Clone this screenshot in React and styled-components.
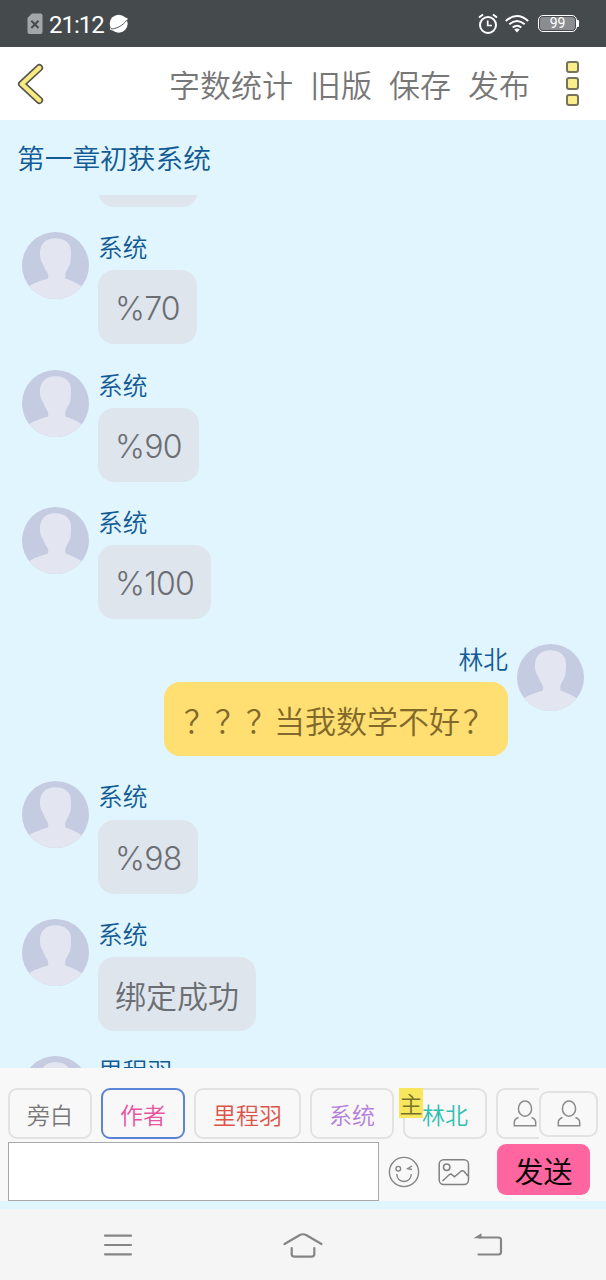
import React , {useState} from 'react';
import styled, {createGlobalStyle} from 'styled-components';

const messages = [
    {name : "系统", text : "%50", latin : true},
    {name : "系统", text : "%70", latin : true},
    {name : "系统", text : "%90", latin : true},
    {name : "系统", text : "%100", latin : true},
    {name : "林北", marks : "？？？", text : "当我数学不好", end : "？", mine : true},
    {name : "系统", text : "%98", latin : true},
    {name : "系统", text : "绑定成功"},
    {name : "里程羽", text : "你是谁"},
];

const roles = [
    {name : "旁白", color : "#777777"},
    {name : "作者", color : "#e8559f"},
    {name : "里程羽", color : "#dc5448"},
    {name : "系统", color : "#b57fdc"},
    {name : "林北", color : "#2fbfb0", main : true},
];


const Avatar = () => (
    <AvatarSvg viewBox="0 0 67 67">
        <clipPath id="round"><circle cx="33.5" cy="33.5" r="33.5" /></clipPath>
        <g clipPath="url(#round)">
            <rect width="67" height="67" fill="#c5cbe1" />
            <path fill="#e3e6f1" d="M33.5 6.300C43 6.300 49.300 11.500 49 20C49 23 49 28 48 32C47 35.500 44 38.500 43.300 42V46.500C50 49 56 51 60 54.500V67H7V54.500C11 51 18 49 26 46.500C26.500 45 26.500 43 25.500 41C24 38.500 22 36 21 32C18.500 29 17.700 24 18 20C18.500 11.500 24 6.300 33.500 6.300Z" />
        </g>
    </AvatarSvg>
);

const Person = () => (
    <svg width="24" height="28" viewBox="0 0 24 28" fill="none" stroke="#8a8a8a" strokeWidth="1.5">
        <ellipse cx="12" cy="8.700" rx="6.600" ry="7.600" />
        <path d="M5.500 17.500C2.500 18.500 1.300 20 1.300 22.500V25.700H22.700V22.500C22.700 20 21.500 18.500 18.500 17.500" />
    </svg>
);


function App() {
    const [selected , setSelected] = useState("作者");
    const [draft , setDraft] = useState("");

    return (
        <Page>
            <Global />

            <StatusBar>
                <svg width="16" height="22" viewBox="0 0 16 22">
                    <path d="M5 0.500H13.500Q15.500 0.500 15.500 2.500V19Q15.500 21 13.500 21H2.500Q0.500 21 0.500 19V5Z" fill="#a3a7a9" />
                    <path d="M4.300 7.800L11.500 15M11.500 7.800L4.300 15" stroke="#454a4d" strokeWidth="2" />
                </svg>
                <Time>21:12</Time>
                <svg width="20" height="20" viewBox="0 0 20 20">
                    <circle cx="9.700" cy="9.700" r="9" fill="#fff" />
                    <path d="M16 4Q19 2.800 18.500 5.500Q17 10 11 14Q5 17.500 1.500 16Q0.300 15 2 13Z" fill="#fff" />
                    <path d="M2 14.800C6 15.500 14.500 11.500 17.800 6" fill="none" stroke="#454a4d" strokeWidth="0.900" />
                </svg>
                <Spacer />
                <svg width="20" height="22" viewBox="0 0 20 22" fill="none" stroke="#fff">
                    <circle cx="10" cy="12" r="8" strokeWidth="2" />
                    <path d="M9.700 7.500V12.500H14" strokeWidth="1.700" />
                    <path d="M1 4.500L5 1.500M15 1.500L19 4.500" strokeWidth="2" />
                </svg>
                <Wifi width="24" height="18" viewBox="0 0 24 18" fill="none" stroke="#fff" strokeWidth="1.900">
                    <path d="M0.800 6Q12 -4 23.200 6M4.300 9.300Q12 2.500 19.700 9.300M7.700 12.500Q12 8.800 16.300 12.500" />
                    <path d="M9.300 14.500Q12 12.700 14.700 14.500L12 17.500Z" fill="#fff" stroke="none" />
                </Wifi>
                <Battery><Charge>99</Charge></Battery>
                <BatteryTip />
            </StatusBar>

            <Header>
                <Back aria-label="back">
                    <svg width="28" height="42" viewBox="0 0 28 42" fill="none" strokeLinecap="round" strokeLinejoin="round">
                        <path d="M22.300 4.800L4.800 21L22.300 37.200" stroke="#55554d" strokeWidth="7.600" />
                        <path d="M22.300 4.800L4.800 21L22.300 37.200" stroke="#f8ec80" strokeWidth="4.400" />
                    </svg>
                </Back>
                <Menu>
                    <MenuItem>字数统计</MenuItem>
                    <MenuItem>旧版</MenuItem>
                    <MenuItem>保存</MenuItem>
                    <MenuItem>发布</MenuItem>
                </Menu>
                <More><Dot /><Dot /><Dot /></More>
            </Header>

            <Chapter>第一章初获系统</Chapter>

            <ChatList>
                {messages.map((m , i) => (
                    <Message key={i} $mine={m.mine}>
                        <Avatar />
                        <Content $mine={m.mine}>
                            <Name>{m.name}</Name>
                            <Bubble $mine={m.mine} $latin={m.latin}>
                                {m.marks && <Marks>{m.marks}</Marks>}
                                {m.text}
                                {m.end && <Marks>{m.end}</Marks>}
                            </Bubble>
                        </Content>
                    </Message>
                ))}
            </ChatList>

            <Composer>
                <RoleBar>
                    <RoleList>
                        {roles.map(r => (
                            <Role key={r.name} $color={r.color} $active={r.name === selected} onClick={() => setSelected(r.name)}>
                                {r.main && <MainBadge>主</MainBadge>}
                                {r.name}
                            </Role>
                        ))}
                        <Role $icon><Person /></Role>
                    </RoleList>
                    <AddRole><Person /></AddRole>
                </RoleBar>

                <InputRow>
                    <Input value={draft} onChange={e => setDraft(e.target.value)} />
                    <Tools>
                        <svg width="32" height="32" viewBox="0 0 32 32" fill="none" stroke="#858585" strokeWidth="1.400">
                            <circle cx="16" cy="16" r="14.600" />
                            <circle cx="10.300" cy="12.700" r="2.300" />
                            <path d="M24 10L19.700 12.700L24 13.500M8.700 18Q9.300 25.300 16 25.500Q22.700 25.300 23.300 18" />
                        </svg>
                        <svg width="32" height="28" viewBox="0 0 32 28" fill="none" stroke="#808080" strokeWidth="1.500">
                            <rect x="1.200" y="1.700" width="29.300" height="24.800" rx="4.500" />
                            <circle cx="8.700" cy="9.300" r="3.200" />
                            <path d="M4.500 23L11.500 16.500Q13 15.500 14.300 17L16.500 18.700L23.300 13Q24.600 12.200 26 13.300L30 18" />
                        </svg>
                    </Tools>
                    <Send>发送</Send>
                </InputRow>
            </Composer>

            <NavBar>
                <svg width="30" height="24" viewBox="0 0 30 24" stroke="#858585" strokeWidth="2.200" strokeLinecap="round">
                    <path d="M2 2.700H28M2 12H28M2 21.300H28" />
                </svg>
                <svg width="42" height="28" viewBox="0 0 42 28" fill="none" stroke="#858585" strokeWidth="2.200" strokeLinecap="round" strokeLinejoin="round">
                    <path d="M2.500 13L17.500 4.300Q21 2.200 24.500 4.300L39.500 13M9.700 17V23Q9.700 25.700 12.500 25.700H29.500Q32.300 25.700 32.300 23V17" />
                </svg>
                <svg width="30" height="26" viewBox="0 0 30 26" fill="none" stroke="#858585" strokeWidth="2.200" strokeLinecap="round">
                    <path d="M6 5.500H25.500Q28 5.500 28 8V20Q28 22.500 25.500 22.500H5.500" />
                    <path d="M0.500 6.300L8.500 1.300V6.300Z" fill="#858585" stroke="none" />
                </svg>
            </NavBar>
        </Page>
    )}

export default App;

const Global = createGlobalStyle`
* { box-sizing: border-box; }
body { margin: 0; }
button, input { font-family: inherit; font-weight: inherit; padding: 0; border: none; background: none; }
svg { display: block; flex-shrink: 0; }
`;

const Page = styled.div`
display: flex;
flex-direction: column;
width: 606px;
height: 1280px;
overflow: hidden;
background: #e0f5fe;
font-family: "Noto Sans CJK SC", sans-serif;
font-weight: 350;
`;

const StatusBar = styled.div`
display: flex;
align-items: center;
height: 47px;
padding: 0 27px 0 27px;
background: #454a4d;
flex-shrink: 0;
`;

const Time = styled.span`
margin: 2px 5px 0 6px;
color: white;
font-family: Roboto, sans-serif;
font-size: 24px;
font-weight: 400;
line-height: 28px;
letter-spacing: -1px;
`;

const Spacer = styled.div`flex: 1;`;

const Wifi = styled.svg`margin: 0 9px 0 7px;`;

const Battery = styled.div`
width: 39px;
height: 17px;
padding: 1px;
border: 1.500px solid white;
border-radius: 5px;
`;

const Charge = styled.div`
height: 13px;
border-radius: 3px;
background: #8a8d8f;
color: white;
font: 400 14px/13px Roboto, sans-serif;
text-align: center;
`;

const BatteryTip = styled.div`
width: 2px;
height: 7px;
background: white;
border-radius: 0 1px 1px 0;
`;

const Header = styled.header`
display: flex;
align-items: center;
height: 73px;
padding: 0 27px 0 17px;
background: white;
flex-shrink: 0;
`;

const Back = styled.button`display: block;`;

const Menu = styled.nav`
display: flex;
gap: 17px;
margin: 0 36px 0 auto;
`;

const MenuItem = styled.span`
color: #777777;
font-size: 31px;
line-height: 46px;
`;

const More = styled.div`
display: flex;
flex-direction: column;
gap: 4px;
`;

const Dot = styled.div`
width: 13px;
height: 12.500px;
border: 2px solid #77735b;
border-radius: 3px;
background: #f8ee8c;
`;

const Chapter = styled.div`
height: 75px;
padding-left: 17px;
color: #125b94;
font-size: 27.700px;
line-height: 74px;
flex-shrink: 0;
`;

const ChatList = styled.main`
height: 873px;
overflow: hidden;
flex-shrink: 0;

/* scrolled past the first message */
& > :first-child {
    margin-top: -100px;
}
`;

const Message = styled.div`
display: flex;
flex-direction: ${props => (props.$mine ? "row-reverse" : "row")};
gap: 9px;
height: 137.300px;
padding: 0 22px;
`;

const AvatarSvg = styled.svg`
width: 67px;
height: 67px;
`;

const Content = styled.div`
display: flex;
flex-direction: column;
align-items: ${props => (props.$mine ? "flex-end" : "flex-start")};
`;

const Name = styled.div`
height: 38.200px;
color: #125b94;
font-size: 24.700px;
line-height: 28px;
`;

const Bubble = styled.div`
height: 74px;
padding: 0 17px;
border-radius: 16px;
background: ${props => (props.$mine ? "#ffde72" : "#dfe5ed")};
color: ${props => (props.$mine ? "#80692a" : "#6b6e73")};
font-family: ${props => (props.$latin ? "Inter, sans-serif" : "inherit")};
font-size: ${props => (props.$latin ? "32px" : "31px")};
letter-spacing: ${props => (props.$latin ? "-0.8px" : "0")};
line-height: ${props => (props.$latin ? "78px" : "75px")};
white-space: nowrap;
`;

const Marks = styled.span`
margin-right: -3px;
padding-left: 3px;
`;

const Composer = styled.footer`
height: 133px;
padding: 20px 8px 0 8px;
background: #f8f8f8;
flex-shrink: 0;
`;

const RoleBar = styled.div`
display: flex;
height: 54px;
`;

const RoleList = styled.div`
display: flex;
gap: 9px;
width: 531px;
overflow: hidden;
flex-shrink: 0;
`;

const Role = styled.button`
display: flex;
position: relative;
align-items: center;
flex-shrink: 0;
height: 51px;
padding: 0 ${props => (props.$icon ? "15px" : "17px")};
border: 2px solid ${props => (props.$active ? "#5c84d6" : "#e2e2e2")};
border-radius: 9px;
color: ${props => props.$color};
font-size: 23px;
line-height: 34px;
`;

const MainBadge = styled.span`
position: absolute;
top: -2px;
left: -6px;
width: 24px;
height: 30px;
background: #f8e75c;
color: #77702c;
line-height: 31px;
text-align: center;
`;

const AddRole = styled.button`
display: flex;
align-items: center;
justify-content: center;
width: 59px;
height: 46px;
margin-top: 2.500px;
border: 2px solid #e2e2e2;
border-radius: 9px;
flex-shrink: 0;
`;

const InputRow = styled.div`
display: flex;
align-items: flex-start;
`;

const Input = styled.input`
width: 371px;
height: 59px;
border: 1px solid #a9a9a9;
background: white;
font-size: 29px;
`;

const Tools = styled.div`
display: flex;
align-items: center;
gap: 18px;
height: 59px;
margin-left: 9px;
`;

const Send = styled.button`
width: 93px;
height: 51px;
margin: 2px 0 0 27px;
border-radius: 9px;
background: #ff659f;
color: black;
font-size: 29px;
line-height: 53px;
`;

const NavBar = styled.div`
display: flex;
align-items: center;
justify-content: space-between;
height: 71px;
margin-top: 8px;
padding: 0 103px;
background: #f5f5f5;
flex-shrink: 0;
`;
